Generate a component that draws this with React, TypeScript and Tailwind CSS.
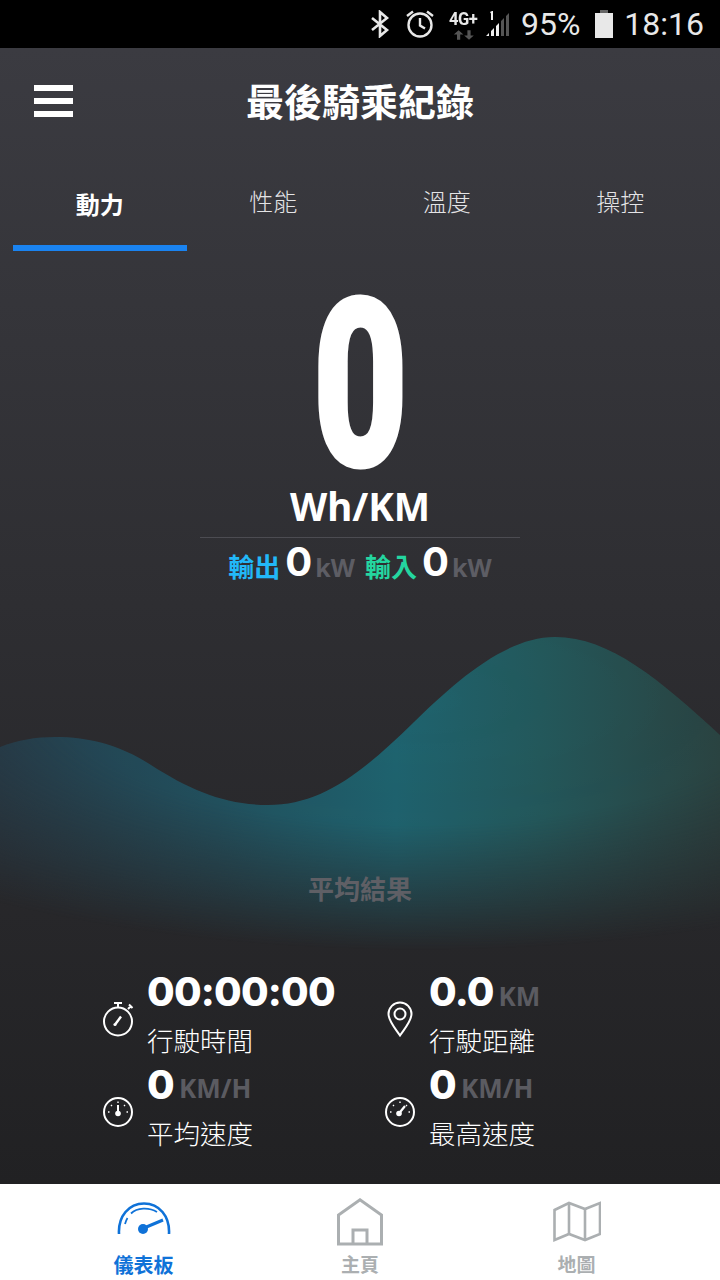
import React from "react";

const sans = "font-['Noto_Sans','Noto_Sans_CJK_TC',sans-serif]";

function Stat({ icon, value, unit, label }: { icon: React.ReactNode; value: string; unit?: string; label: string }) {
  return (
    <div className="flex h-[92.500px] w-[282px] items-start">
      <div className="mr-[6px] flex h-[92px] w-[47px] shrink-0 items-center justify-center pt-[10px]">{icon}</div>
      <div className="flex flex-col">
        <div className="flex h-[48px] items-center">
          <span className="text-[40px] font-extrabold leading-none tracking-[-0.8px] text-white font-['Inter',sans-serif]">{value}</span>
          {unit && <span className="ml-[5px] mt-[7px] text-[26px] font-bold leading-none text-[#5b5b61] font-['Noto_Sans',sans-serif]">{unit}</span>}
        </div>
        <div className="mt-[6px] text-[26.500px] font-light leading-[36px] text-white font-['Noto_Sans_CJK_TC',sans-serif]">{label}</div>
      </div>
    </div>
  );
}

const Stopwatch = () => (
  <svg width="32" height="36" viewBox="0 0 32 36" fill="none" stroke="white" strokeWidth="2">
    <circle cx="16" cy="20.500" r="14" />
    <path d="M12 2h8M16 2v4.500M26 8l3-3M27 3.500l3.500 3.500" />
    <path d="M13.500 23L19 15.500" strokeWidth="2.400" />
    <circle cx="13" cy="23.500" r="1.600" fill="white" stroke="none" />
  </svg>
);
const Dial = ({ tilt }: { tilt?: boolean }) => (
  <svg width="32" height="32" viewBox="0 0 32 32" fill="none" stroke="white" strokeWidth="2">
    <circle cx="16" cy="16" r="14" />
    <path d="M16 5.500v1.500M6 16h1.500M24.500 16H26M9 9l1 1M23 9l-1 1" strokeWidth="1.400" />
    {tilt ? <path d="M15 17.500L21 10" strokeWidth="2.200" /> : <path d="M16 9v8" strokeWidth="2" />}
    <circle cx={tilt ? 15 : 16} cy="17.500" r="2.800" fill="white" stroke="none" />
  </svg>
);
const Pin = () => (
  <svg width="26" height="36" viewBox="0 0 26 36" fill="none" stroke="white" strokeWidth="2">
    <path d="M13 34.500C8 27 1.500 20 1.500 13a11.500 11.500 0 0 1 23 0c0 7-6.500 14-11.500 21.500z" />
    <circle cx="13" cy="13" r="5.500" />
  </svg>
);

function KwRow() {
  return (
    <div className="flex h-[54px] items-center">
      <span className="text-[26px] font-bold text-[#22b8f8] font-['Noto_Sans_CJK_TC',sans-serif]">輸出</span>
      <span className="ml-[5px] mt-[-6px] text-[40px] font-bold leading-none text-white font-['Inter',sans-serif]">0</span>
      <span className="ml-[3px] mt-[4px] text-[25px] font-bold leading-none text-[#5d5d64] font-['Noto_Sans',sans-serif]">kW</span>
      <span className="ml-[10px] text-[26px] font-bold text-[#24d6a0] font-['Noto_Sans_CJK_TC',sans-serif]">輸入</span>
      <span className="ml-[5px] mt-[-6px] text-[40px] font-bold leading-none text-white font-['Inter',sans-serif]">0</span>
      <span className="ml-[3px] mt-[4px] text-[25px] font-bold leading-none text-[#5d5d64] font-['Noto_Sans',sans-serif]">kW</span>
    </div>
  );
}

export default function App() {
  return (
    <div className={`flex h-[1280px] w-[720px] flex-col overflow-hidden ${sans}`}>
      <div className="flex h-[48px] shrink-0 items-center justify-end bg-black pr-[16px] text-[#e8e8e8]">
        <svg width="20" height="28" viewBox="0 0 20 28" fill="none" stroke="#e8e8e8" strokeWidth="2.600">
          <path d="M2 8l15 12-7 6V2l7 6L2 20" />
        </svg>
        <svg width="30" height="30" viewBox="0 0 30 30" fill="none" stroke="#e8e8e8" strokeWidth="2.400" className="ml-[15px]">
          <circle cx="15" cy="16" r="11.500" />
          <path d="M15 9v7.500l5 3M2 7l6-4.500M28 7l-6-4.500" />
        </svg>
        <div className="relative ml-[14px] h-[32px] w-[32px]">
          <span className="absolute left-0 top-[1px] inline-block origin-left scale-x-[0.92] text-[18px] font-bold leading-[20px] tracking-[-0.5px] text-[#e8e8e8] font-['Roboto',sans-serif]">4G+</span>
          <svg width="24" height="12" viewBox="0 0 30 12" fill="#555" className="absolute left-[4px] top-[21px]">
            <path d="M7 0l6 5.500H9V12H5V5.500H1zM20 12l-6-5.500h4V0h4v6.500h4z" />
          </svg>
        </div>
        <svg width="24" height="28" viewBox="0 0 24 28" className="ml-[5px]">
          <path d="M0 26l3-3v3zM5 26v-5l3-3v8zM10 26V16l3-3v13z" fill="#f0f0f0" />
          <path d="M15 26V11l3-3v18zM20 26V6l3-3v23z" fill="#555" />
          <path d="M4 2l2-1h1v9H5V3.500z" fill="#f0f0f0" />
        </svg>
        <span className="ml-[11px] text-[32px] leading-none font-['Roboto',sans-serif]">95%</span>
        <svg width="20" height="30" viewBox="0 0 20 30" className="ml-[14px]">
          <path d="M6 1h8v3h-8z" fill="#666" />
          <path d="M1 4h18v25H1z" fill="#e8e8e8" />
        </svg>
        <span className="ml-[10px] text-[32px] leading-none font-['Roboto',sans-serif]">18:16</span>
      </div>

      <div className="relative flex flex-1 flex-col bg-gradient-to-b from-[#3b3b41] to-[#212123]">
        <div className="relative flex h-[110px] shrink-0 items-center justify-center">
          <div className="absolute left-[34px] top-[37px] flex w-[39px] flex-col gap-[7px]">
            <div className="h-[6px] bg-white" />
            <div className="h-[6px] bg-white" />
            <div className="h-[6px] bg-white" />
          </div>
          <span className="mt-[-6px] text-[38px] font-bold leading-none text-white font-['Noto_Sans_CJK_TC',sans-serif]">最後騎乘紀錄</span>
        </div>

        <div className="flex h-[93px] shrink-0 px-[13px]">
          <div className="flex w-[173.500px] flex-col items-center border-b-[6px] border-[#1a83f0]">
            <span className="mt-[34px] text-[24px] font-bold leading-none text-white font-['Noto_Sans_CJK_TC',sans-serif]">動力</span>
          </div>
          {["性能", "溫度", "操控"].map((t) => (
            <div key={t} className="flex w-[173.500px] flex-col items-center">
              <span className="mt-[31px] text-[24px] font-light leading-none text-[#e4e4e6] font-['Noto_Sans_CJK_TC',sans-serif]">{t}</span>
            </div>
          ))}
        </div>

        <div className="flex flex-col items-center">
          <div className="mt-[27px] flex h-[215px] items-center justify-center">
            <span className="inline-block scale-x-[0.7] text-[236px] font-black leading-none text-white font-['Roboto',sans-serif] [-webkit-text-stroke:3px_white]">0</span>
          </div>
          <div className="mt-[-9px] text-[38.500px] font-bold leading-[44px] text-white font-['Noto_Sans',sans-serif]">Wh/KM</div>
          <div className="mt-[9px] h-px w-[320px] bg-[#4c4c52]" />
          <KwRow />
        </div>

        <svg className="absolute left-0 top-0" width="720" height="960" viewBox="0 48 720 960">
          <defs>
            <linearGradient id="hue" gradientUnits="userSpaceOnUse" x1="0" y1="0" x2="720" y2="0">
              <stop offset="0" stopColor="#25404f" />
              <stop offset="0.3" stopColor="#21515f" />
              <stop offset="0.55" stopColor="#1e6470" />
              <stop offset="0.75" stopColor="#23595c" />
              <stop offset="1" stopColor="#2a4442" />
            </linearGradient>
            <radialGradient id="fade" gradientUnits="userSpaceOnUse" cx="0" cy="0" r="1" gradientTransform="translate(420 700) scale(720 250)">
              <stop offset="0" stopColor="white" />
              <stop offset="0.5" stopColor="white" stopOpacity="0.95" />
              <stop offset="0.8" stopColor="white" stopOpacity="0.4" />
              <stop offset="1" stopColor="white" stopOpacity="0" />
            </radialGradient>
            <mask id="m" maskUnits="userSpaceOnUse" x="0" y="600" width="720" height="400">
              <rect x="0" y="600" width="720" height="400" fill="url(#fade)" />
            </mask>
          </defs>
          <path
            d="M0 747C18 740 35 737 55 737C90 737 120 745 151 765C190 790 225 805 268 805C320 805 360 775 413 723C455 682 505 637 555 637C610 637 660 680 720 735V1000H0Z"
            fill="url(#hue)"
            mask="url(#m)"
          />
        </svg>

        <div className="relative mt-[283px] text-center text-[26px] font-bold leading-none text-[#5f5f65] font-['Noto_Sans_CJK_TC',sans-serif]">平均結果</div>

        <div className="relative ml-[94px] mt-[67px] grid grid-cols-[282px_282px]">
          <Stat icon={<Stopwatch />} value="00:00:00" label="行駛時間" />
          <Stat icon={<Pin />} value="0.0" unit="KM" label="行駛距離" />
          <Stat icon={<Dial />} value="0" unit="KM/H" label="平均速度" />
          <Stat icon={<Dial tilt />} value="0" unit="KM/H" label="最高速度" />
        </div>
      </div>

      <div className="flex h-[96px] shrink-0 bg-white font-['Noto_Sans_CJK_TC',sans-serif]">
        <div className="flex w-[287px] flex-col items-center pt-[17px]">
          <svg width="54" height="36" viewBox="0 0 54 36" fill="none" stroke="#0f72d8" strokeWidth="2.600">
            <path d="M2 33C1 15 12 2.500 27 2.500S53 15 52 33" />
            <path d="M8 23C9 20 9.500 18.500 10.500 17M14 12.500C20 6.500 32 6 40 11" strokeWidth="1.800" />
            <path d="M27 27L46 19" strokeWidth="3" />
            <circle cx="26" cy="28" r="5" fill="#0f72d8" stroke="none" />
          </svg>
          <span className="mt-[14px] text-[20px] font-bold leading-[28px] text-[#0f72d8]">儀表板</span>
        </div>
        <div className="flex w-[146px] flex-col items-center pt-[14px]">
          <svg width="46" height="48" viewBox="0 0 46 48" fill="none" stroke="#abafb1" strokeWidth="3">
            <path d="M1.500 46V17L23 1.800 44.500 17V46Z" />
            <path d="M16 46V32H30V46" />
          </svg>
          <span className="mt-[5px] text-[19px] font-bold leading-[26px] text-[#abafb1]">主頁</span>
        </div>
        <div className="flex w-[287px] flex-col items-center pt-[16px]">
          <svg width="48" height="42" viewBox="0 0 48 42" fill="none" stroke="#abafb1" strokeWidth="2.600">
            <path d="M1.500 10L16 3l16 6 15-6v31l-15 6-16-6-14.500 6Z" />
            <path d="M16 3v31M32 9v31" />
          </svg>
          <span className="mt-[9px] text-[19px] font-bold leading-[26px] text-[#abafb1]">地圖</span>
        </div>
      </div>
    </div>
  );
}
